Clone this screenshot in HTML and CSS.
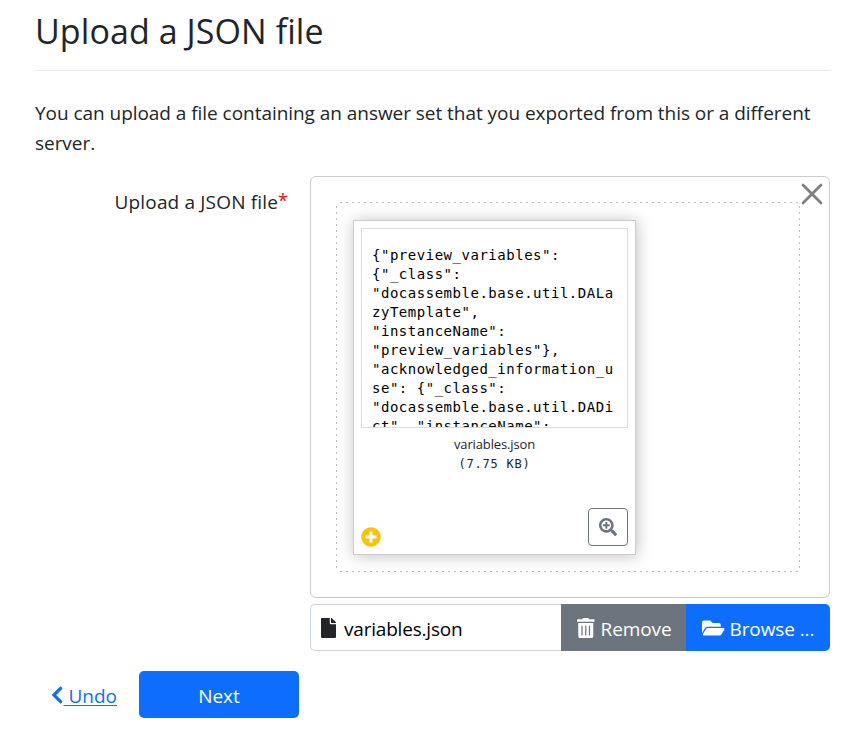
FILE: index.html
```html
<!DOCTYPE html>
<html lang="en">
<head>
<meta charset="utf-8">
<title>Upload a JSON file</title>
<link rel="stylesheet" href="styles.css">
</head>
<body>
<main class="page">
  <h1 class="title"><span>Upload a JSON file</span></h1>
  <p class="intro"><span class="line-one">You can upload a file containing an answer set that you exported from this or a different</span><br>server.</p>
  <form class="form-row">
    <label class="label"><span class="label-text">Upload a JSON file</span><span class="required">*</span></label>
    <div class="field">
      <section class="preview">
        <button class="close" type="button" aria-label="Close"><svg width="22" height="22" viewBox="0 0 22 22"><path d="M2 2 20 20M20 2 2 20" fill="none" stroke="#808080" stroke-width="2.8" stroke-linecap="round"/></svg></button>
        <div class="drop-zone">
          <article class="thumb">
            <pre class="content">{"preview_variables":
{"_class":
"docassemble.base.util.DALa
zyTemplate",
"instanceName":
"preview_variables"},
"acknowledged_information_u
se": {"_class":
"docassemble.base.util.DADi
ct", "instanceName":</pre>
            <div class="caption"><span class="name">variables.json</span><span class="size">(7.75 KB)</span></div>
            <div class="actions">
              <svg class="plus" width="20" height="20" viewBox="0 0 512 512"><path fill="#ffc107" d="M256 8C119 8 8 119 8 256s111 248 248 248 248-111 248-248S393 8 256 8zm144 276c0 6.600-5.400 12-12 12h-92v92c0 6.600-5.400 12-12 12h-56c-6.600 0-12-5.400-12-12v-92h-92c-6.600 0-12-5.400-12-12v-56c0-6.600 5.400-12 12-12h92v-92c0-6.600 5.400-12 12-12h56c6.600 0 12 5.400 12 12v92h92c6.600 0 12 5.400 12 12v56z"/></svg>
              <button class="zoom" type="button" aria-label="View details"><svg width="18" height="18" viewBox="0 0 512 512"><path fill="#6c757d" d="M304 192v32c0 6.600-5.400 12-12 12h-56v56c0 6.600-5.400 12-12 12h-32c-6.600 0-12-5.400-12-12v-56h-56c-6.600 0-12-5.400-12-12v-32c0-6.600 5.400-12 12-12h56v-56c0-6.600 5.400-12 12-12h32c6.600 0 12 5.400 12 12v56h56c6.600 0 12 5.400 12 12zm201 284.700L476.700 505c-9.400 9.400-24.600 9.400-33.900 0L343 405.300c-4.500-4.500-7-10.600-7-17V372c-35.300 27.600-79.700 44-128 44C93.100 416 0 322.900 0 208S93.100 0 208 0s208 93.100 208 208c0 48.300-16.400 92.700-44 128h16.300c6.400 0 12.500 2.500 17 7l99.700 99.700c9.300 9.400 9.300 24.600 0 34zM344 208c0-75.200-60.800-136-136-136S72 132.800 72 208s60.800 136 136 136 136-60.800 136-136z"/></svg></button>
            </div>
          </article>
        </div>
      </section>
      <div class="input-group">
        <div class="file-name"><svg width="15" height="20" viewBox="0 0 384 512"><path fill="#212529" d="M224 136V0H24C10.700 0 0 10.700 0 24v464c0 13.300 10.700 24 24 24h336c13.300 0 24-10.700 24-24V160H248c-13.200 0-24-10.800-24-24zm160-14.100v6.100H256V0h6.100c6.400 0 12.500 2.500 17 7l97.900 98c4.500 4.500 7 10.600 7 16.900z"/></svg><span class="file-text">variables.json</span></div>
        <button class="remove" type="button"><svg width="17.500" height="20" viewBox="0 0 448 512"><path fill="#fff" d="M32 464a48 48 0 0 0 48 48h288a48 48 0 0 0 48-48V128H32zm272-256a16 16 0 0 1 32 0v224a16 16 0 0 1-32 0zm-96 0a16 16 0 0 1 32 0v224a16 16 0 0 1-32 0zm-96 0a16 16 0 0 1 32 0v224a16 16 0 0 1-32 0zM432 32H312l-9.400-18.700A24 24 0 0 0 281.100 0H166.800a24 24 0 0 0-21.400 13.300L136 32H16A16 16 0 0 0 0 48v32a16 16 0 0 0 16 16h416a16 16 0 0 0 16-16V48a16 16 0 0 0-16-16z"/></svg><span>Remove</span></button>
        <button class="browse" type="button"><svg width="22.500" height="20" viewBox="0 0 576 512"><path fill="#fff" d="M572.700 292.100 500.300 416.200A64 64 0 0 1 445 448H45c-18.500 0-30.100-20.100-20.700-36.100l72.400-124.100A64 64 0 0 1 152 256h400c18.500 0 30.100 20.100 20.700 36.100zM152 224h328v-48c0-26.500-21.500-48-48-48H272l-64-64H48C21.500 64 0 85.500 0 112v278l69.100-118.400C86.200 242.200 118 224 152 224z"/></svg><span>Browse ...</span></button>
      </div>
    </div>
  </form>
  <div class="nav">
    <a class="undo"><svg width="12.500" height="20" viewBox="0 0 320 512"><path fill="#0d6efd" d="M34.500 239 228.900 44.700c9.400-9.400 24.600-9.400 33.900 0l22.700 22.700c9.400 9.400 9.400 24.500 0 33.900L131.500 256l154 154.800c9.300 9.400 9.300 24.500 0 33.900l-22.700 22.700c-9.400 9.400-24.600 9.400-33.900 0L34.500 273c-9.300-9.400-9.300-24.600 0-34z"/></svg><span class="undo-text">&nbsp;Undo</span></a>
    <button class="next" type="button">Next</button>
  </div>
</main>
</body>
</html>
```
FILE: styles.css
```css
* { box-sizing: border-box; }
body {
  margin: 0;
  background: #fff;
  color: #212529;
  font: 19px/30px "Open Sans", "Noto Sans", sans-serif;
}
button { font: inherit; border: 0; padding: 0; }
svg { display: block; flex: none; }
.page { width: 795px; margin-left: 35px; }
.title {
  margin: 0;
  height: 71px;
  padding-top: 10px;
  border-bottom: 1px solid #ebebec;
  font-size: 34px;
  font-weight: 400;
  letter-spacing: .08px;
  line-height: 42px;
}
.intro { margin: 27px 0 0; white-space: nowrap; letter-spacing: -.045px; }
.form-row { display: flex; margin-top: 18px; }
.label { width: 275px; padding: 11px 22px 0 0; text-align: right; white-space: nowrap; }
.label-text { letter-spacing: .17px; }
.required { color: #f00; font-size: 18px; line-height: 1; vertical-align: 2px; }
.field { width: 520px; }
.preview {
  position: relative;
  height: 422px;
  padding: 25px;
  border: 1px solid #ccc;
  border-radius: 6px;
}
.close { position: absolute; top: 6px; right: 6px; background: none; }
.drop-zone {
  width: 464px;
  height: 370px;
  padding: 18px 17px;
  border-radius: 4px;
  background:
    repeating-linear-gradient(90deg, #bbb 0 2px, transparent 2px 6px) 4px 0 / 458px 1px no-repeat,
    repeating-linear-gradient(90deg, #bbb 0 2px, transparent 2px 6px) 4px 100% / 458px 1px no-repeat,
    repeating-linear-gradient(180deg, #bbb 0 2px, transparent 2px 6px) 0 4px / 1px 364px no-repeat,
    repeating-linear-gradient(180deg, #bbb 0 2px, transparent 2px 6px) 100% 4px / 1px 364px no-repeat;
}
.thumb {
  width: 283px;
  height: 335px;
  padding: 7px;
  border: 1px solid #ccc;
  box-shadow: 1px 1px 15px rgba(0, 0, 0, .25);
  background: #fff;
}
.content {
  height: 200px;
  margin: 0;
  padding: 17px 10px 0;
  border: 1px solid #ddd;
  overflow: hidden;
  color: #000;
  font: 14px/19px "DejaVu Sans Mono", monospace;
  letter-spacing: .52px;
}
.caption {
  display: flex;
  flex-direction: column;
  align-items: center;
  height: 80px;
  padding-top: 7px;
  font-size: 13px;
  line-height: 19px;
}
.name { letter-spacing: -.14px; }
.size { padding-top: 1px; font: 12px/19px "DejaVu Sans Mono", monospace; letter-spacing: .75px; }
.actions { display: flex; justify-content: space-between; align-items: flex-end; height: 38px; }
.plus { margin-bottom: -1px; }
.zoom {
  display: flex;
  align-items: center;
  justify-content: center;
  width: 40px;
  height: 38px;
  border: 1px solid #6c757d;
  border-radius: 4px;
  background: #fff;
}
.input-group { display: flex; height: 47px; margin-top: 6px; }
.input-group span { padding-top: 2px; letter-spacing: -.1px; }
.file-name, .remove, .browse { display: flex; align-items: center; white-space: nowrap; }
.file-name {
  width: 251px;
  gap: 8px;
  padding-left: 10px;
  border: 1px solid #ced4da;
  border-right: 0;
  border-radius: 5px 0 0 5px;
  color: #000;
}
.input-group .file-text { letter-spacing: -.2px; }
.remove { width: 125px; padding-left: 16px; gap: 6px; background: #6c757d; color: #fff; }
.browse { width: 144px; padding-left: 16px; gap: 5px; border-radius: 0 5px 5px 0; background: #0d6efd; color: #fff; }
.nav { display: flex; align-items: center; height: 47px; margin-top: 20px; }
.undo { display: flex; align-items: center; width: 104px; padding-left: 16px; color: #0d6efd; white-space: nowrap; }
.undo-text { padding-top: 2px; text-decoration: underline; text-decoration-thickness: 1px; text-underline-offset: 2px; }
.next { width: 160px; height: 47px; padding-top: 2px; border-radius: 5px; background: #0d6efd; color: #fff; }
```
